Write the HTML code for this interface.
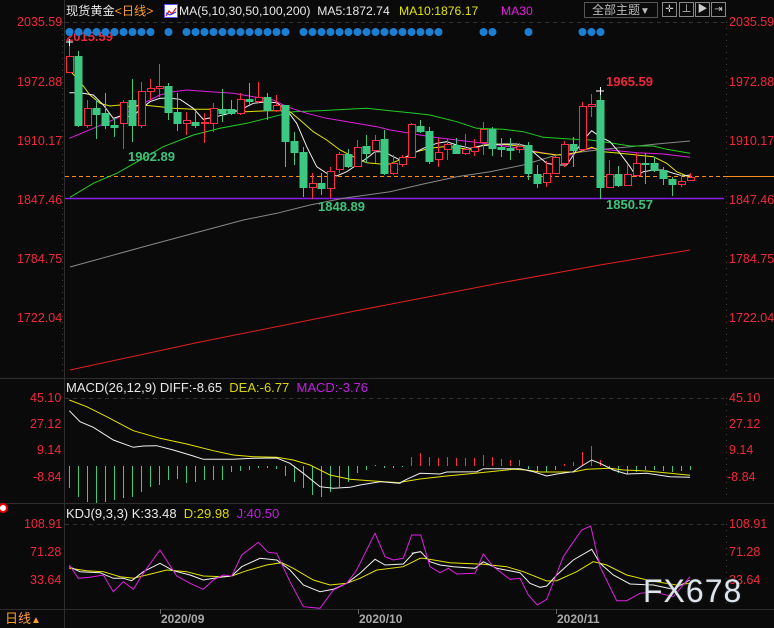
<!DOCTYPE html>
<html><head><meta charset="utf-8">
<style>
html,body{margin:0;padding:0;background:#0a0a0a;width:774px;height:628px;overflow:hidden;font-family:"Liberation Sans","Noto Sans CJK SC",sans-serif;}
svg{position:absolute;left:0;top:0}
.t{position:absolute;font-size:13px;white-space:nowrap;line-height:14px}
.h{font-size:12.2px}
.ax{position:absolute;font-size:12.5px;color:#f0283c;white-space:nowrap;line-height:13px}
.ib{position:absolute;top:2px;width:13px;height:13px;border:1px solid #888;color:#ccc;font-size:10px;line-height:13px;text-align:center}
</style></head><body>
<svg id="s" width="774" height="628" xmlns="http://www.w3.org/2000/svg">
<rect width="774" height="628" fill="#0a0a0a"/>
<g stroke="#2e2e2e" stroke-width="1">
<line x1="64.5" y1="0" x2="64.5" y2="628"/>
<line x1="0" y1="378.5" x2="774" y2="378.5"/>
<line x1="0" y1="503.5" x2="774" y2="503.5"/>
<line x1="0" y1="609.5" x2="774" y2="609.5"/>
</g>
<g stroke="#333" stroke-dasharray="4,4">
<line x1="65" y1="22.5" x2="724" y2="22.5"/>
<line x1="65" y1="398.5" x2="724" y2="398.5"/>
<line x1="65" y1="524.5" x2="724" y2="524.5"/>
</g>
<g stroke="#444" stroke-dasharray="1,5">
<line x1="726.5" y1="22" x2="726.5" y2="376"/>
<line x1="726.5" y1="398" x2="726.5" y2="500"/>
<line x1="726.5" y1="524" x2="726.5" y2="606"/>
<line x1="62.5" y1="22" x2="62.5" y2="376"/>
</g>
<g stroke="#666"><line x1="160.5" y1="609" x2="160.5" y2="614"/><line x1="358.5" y1="609" x2="358.5" y2="614"/><line x1="556.5" y1="609" x2="556.5" y2="614"/></g>
<line x1="65" y1="176.5" x2="724" y2="176.5" stroke="#ff8c1a" stroke-dasharray="4,3"/>
<line x1="724" y1="176.5" x2="774" y2="176.5" stroke="#ff8c1a"/>
<line x1="65" y1="198.5" x2="724" y2="198.5" stroke="#8a1ee8" stroke-width="1.5"/>
<text x="66" y="41" fill="#f0283c" font-size="13" font-weight="bold" font-family="Liberation Sans, sans-serif">2015.59</text>
<g id="g"></g>
</svg>

<div class="t h" style="left:66px;top:4px;color:#e8e8e8">现货黄金<span style="color:#ff9c2a">&lt;日线&gt;</span></div>
<div style="position:absolute;left:164px;top:4px;width:12px;height:12px;background:#fff;border:1px solid #55f"><svg width="12" height="12" style="position:static"><polyline points="1,10 4,5 7,8 11,2" fill="none" stroke="#e22" stroke-width="1.3"/><polyline points="1,7 5,9 11,6" fill="none" stroke="#22e" stroke-width="1"/></svg></div>
<div class="t h" style="left:179px;top:4px;color:#e8e8e8">MA(5,10,30,50,100,200)&nbsp; MA5:1872.74</div>
<div class="t h" style="left:399px;top:4px;color:#e4e400">MA10:1876.17</div>
<div class="t h" style="left:501px;top:4px;color:#e020e0">MA30</div>
<div style="position:absolute;left:584px;top:2px;width:72px;height:14px;border:1px solid #555;color:#bbb;font-size:12px;line-height:14px;text-align:center">全部主题<span style="font-size:10px">▼</span></div>
<div class="ib" style="left:662px">✛</div>
<div class="ib" style="left:679px">⊥</div>
<div class="ib" style="left:695px">▶</div>
<div class="ib" style="left:711px">⇥</div>

<div class="ax" style="left:17px;top:16px">2035.59</div><div class="ax" style="left:729px;top:16px">2035.59</div>
<div class="ax" style="left:17px;top:76px">1972.88</div><div class="ax" style="left:729px;top:76px">1972.88</div>
<div class="ax" style="left:17px;top:135px">1910.17</div><div class="ax" style="left:729px;top:135px">1910.17</div>
<div class="ax" style="left:17px;top:194px">1847.46</div><div class="ax" style="left:729px;top:194px">1847.46</div>
<div class="ax" style="left:17px;top:253px">1784.75</div><div class="ax" style="left:729px;top:253px">1784.75</div>
<div class="ax" style="left:17px;top:312px">1722.04</div><div class="ax" style="left:729px;top:312px">1722.04</div>
<div class="ax" style="left:30px;top:392px">45.10</div><div class="ax" style="left:729px;top:392px">45.10</div>
<div class="ax" style="left:30px;top:418px">27.12</div><div class="ax" style="left:729px;top:418px">27.12</div>
<div class="ax" style="left:37px;top:444px">9.14</div><div class="ax" style="left:729px;top:444px">9.14</div>
<div class="ax" style="left:33px;top:471px">-8.84</div><div class="ax" style="left:727px;top:471px">-8.84</div>
<div class="ax" style="left:24px;top:518px">108.91</div><div class="ax" style="left:729px;top:518px">108.91</div>
<div class="ax" style="left:30px;top:546px">71.28</div><div class="ax" style="left:729px;top:546px">71.28</div>
<div class="ax" style="left:30px;top:574px">33.64</div><div class="ax" style="left:729px;top:574px">33.64</div>

<div class="t" style="left:66px;top:381px;color:#e8e8e8">MACD(26,12,9) DIFF:-8.65 &nbsp;<span style="color:#d8d800">DEA:-6.77</span> &nbsp;<span style="color:#c020e0">MACD:-3.76</span></div>
<div class="t" style="left:66px;top:507px;color:#e8e8e8">KDJ(9,3,3) K:33.48 &nbsp;<span style="color:#d8d800">D:29.98</span> &nbsp;<span style="color:#c020e0">J:40.50</span></div>
<div style="position:absolute;left:0px;top:505px;width:6px;height:6px;border-radius:50%;background:#fff;box-shadow:0 0 0 2px #e00"></div>

<div class="t" style="left:128px;top:150px;color:#3cc47c;font-weight:bold">1902.89</div>
<div class="t" style="left:318px;top:200px;color:#3cc47c;font-weight:bold">1848.89</div>
<div class="t" style="left:606px;top:75px;color:#f0283c;font-weight:bold">1965.59</div>
<div class="t" style="left:606px;top:198px;color:#3cc47c;font-weight:bold">1850.57</div>

<div class="t" style="left:161px;top:612px;color:#aaa;font-size:12px;font-weight:bold">2020/09</div>
<div class="t" style="left:359px;top:612px;color:#aaa;font-size:12px;font-weight:bold">2020/10</div>
<div class="t" style="left:557px;top:612px;color:#aaa;font-size:12px;font-weight:bold">2020/11</div>
<div class="t" style="left:5px;top:612px;color:#ff9c2a">日线<span style="font-size:10px">▲</span></div>
<div style="position:absolute;left:643px;top:573px;font-size:32px;color:#dde4ee;letter-spacing:1px;font-family:'Liberation Sans',sans-serif;text-shadow:0 0 2px #333">FX678</div>

<script>
var g=document.getElementById('g'),h='';
function P(a,ox,oy){var s='';for(var i=0;i<a.length;i+=2)s+=(ox+a[i]/3).toFixed(1)+','+(oy+a[i+1]/3).toFixed(1)+' ';return s;}
function L(p,c,w){h+='<polyline points="'+p+'" fill="none" stroke="'+c+'" stroke-width="'+(w||1)+'"/>';}
L('70,370 200,342 350,312 500,283 600,265 690,250','#e0201e');
L('70,267 150,245 '+P([550,540,650,520,750,495,850,475,990,455],60,40)+P([100,432,200,410,300,395,400,375,500,345,580,335,640,328,720,320,800,312,900,303],390,40),'#888');
L(P([30,472,100,430,170,400,250,355,310,320,400,285,480,265,560,250,640,230,700,215,780,212,860,208,920,205,990,212],60,40)+P([60,218,120,225,200,245,260,265,340,268,400,275,460,292,540,297,600,300,660,308,720,318,790,318,830,328,900,340],390,40),'#22cc22');
L(P([28,295,100,265,170,235,240,195,300,165,340,155,380,150,450,155,520,160,580,170,640,180,680,200,740,220,800,235,880,248,950,260,990,270],60,40)+P([60,280,120,290,200,300,280,310,360,320,440,335,500,345,540,345,580,330,610,325,660,330,740,338,820,342,900,352],390,40),'#e020e0');
L(P([28,90,60,125,90,165,120,190,150,198,180,195,210,200,240,195,270,197,300,200,340,205,400,208,450,208,500,210,560,215,620,212,660,212,690,215,720,240,760,275,800,300,840,330,880,350,920,368,960,372,990,372],60,40)+P([40,355,80,335,120,325,160,320,200,322,240,330,280,315,320,312,360,315,400,320,430,335,460,340,500,345,540,342,570,335,605,322,640,335,690,340,740,345,790,350,830,370,860,395,890,408,900,410],390,40),'#e4e400');
L(P([28,158,60,158,100,165,130,195,160,235,190,225,215,232,245,205,270,185,300,175,330,175,360,178,400,205,430,238,460,232,500,222,540,210,580,190,620,185,650,188,680,210,710,250,740,320,770,380,800,400,830,408,860,395,890,375,920,355,945,335,975,335,990,345],60,40)+P([30,360,60,345,100,325,140,310,170,305,200,315,240,325,270,318,300,315,340,312,380,312,410,318,440,345,470,370,500,375,530,375,560,330,580,300,605,272,630,290,660,305,690,340,720,380,738,408,760,395,790,390,820,390,850,400,880,408,900,405],390,40),'#f0f0f0');
var C=[[56,72,42,72,1],[56,125,51,127,0],[108,125,100,128,1],[108,114,100,139,0],[113,125,93,129,0],[125,127,118,137,0],[102,123,100,149,1],[100,125,79,142,0],[91,125,82,128,1],[88,91,79,100,1],[86,88,64,97,1],[86,112,83,120,0],[112,123,93,131,0],[120,123,112,135,1],[122,125,112,128,0],[122,123,113,143,1],[108,123,103,132,1],[109,113,89,122,0],[109,113,100,115,0],[99,113,93,115,1],[99,101,83,105,0],[97,101,82,103,1],[97,110,93,120,0],[105,110,95,112,1],[105,141,105,167,0],[141,152,132,165,0],[152,187,147,197,0],[183,187,173,199,1],[183,188,173,195,0],[171,188,167,198,1],[154,169,152,173,1],[154,166,149,168,0],[147,166,140,167,1],[146,153,135,163,0],[140,150,135,163,1],[139,173,130,175,0],[163,173,155,175,1],[157,164,155,167,1],[124,157,123,158,1],[126,131,120,133,0],[131,161,127,164,0],[152,159,138,167,1],[144,149,139,160,1],[145,153,138,153,0],[149,153,134,155,1],[147,151,139,156,1],[129,142,122,155,1],[129,148,127,156,0],[147,149,138,157,0],[148,150,138,160,0],[146,149,143,153,1],[145,173,142,180,0],[174,183,165,188,0],[173,182,161,187,1],[157,173,155,174,1],[144,163,141,167,1],[144,150,137,167,0],[106,149,102,151,1],[104,106,94,117,1],[100,187,90,199,0],[174,187,160,188,1],[174,185,166,187,0],[174,185,165,186,1],[163,175,153,177,1],[163,164,153,184,0],[163,170,157,172,0],[170,178,167,185,0],[179,184,177,196,0],[181,184,175,187,1],[177,180,173,181,1]];
C.forEach(function(c,k){var x=69+9*k,col=c[4]?'#ff2e44':'#3cc882';
 h+='<line x1="'+(x+.5)+'" y1="'+c[2]+'" x2="'+(x+.5)+'" y2="'+c[3]+'" stroke="'+col+'"/>';
 var bh=Math.max(1,c[1]-c[0]);
 if(c[4])h+='<rect x="'+(x-3+.5)+'" y="'+(c[0]+.5)+'" width="7" height="'+bh+'" fill="#0a0a0a" stroke="'+col+'"/>';
 else h+='<rect x="'+(x-3.5)+'" y="'+c[0]+'" width="8" height="'+(bh+1)+'" fill="'+col+'"/>';
});
h+='<path d="M66 42h7M69.5 39v7M596 91h8M600.5 87v8" stroke="#fff"/>';
var D=[0,1,2,3,4,5,6,7,8,9,11,13,14,15,16,17,18,19,20,21,22,23,24];for(var i=26;i<=41;i++)D.push(i);D.push(46,47,51,57,58,59);
D.forEach(function(k){h+='<circle cx="'+(69+9*k+0.5)+'" cy="32" r="4" fill="#1a7ed2"/>';});
var B=[488,497,502,503,502,500,498,497,492,487,485,480,479,483,482,480,480,480,472,471,470,468,468,469,476,482,488,495,497,492,487,482,473,470,465,468,468,467,457,453,457,458,457,458,458,458,455,457,459,460,460,469,472,472,470,464,462,452,446,460,468,473,474,472,470,470,471,472,471,470];
B.forEach(function(b,k){var x=69+9*k+.5,red=(k>=38&&k<=50)||(k>=55&&k<=59);var base=466;
 h+='<line x1="'+x+'" y1="'+base+'" x2="'+x+'" y2="'+b+'" stroke="'+(red?'#ff2e44':'#3cc882')+'"/>';});
L(P([208,90,260,110,320,140,400,182,480,205,560,222,640,242,700,255,760,260,830,262,880,270,930,285,990,315,1050,328,1120,333,1200,338],0,370)+P([70,335,120,327,200,318,300,308,400,298,440,300,480,306,580,306,620,298,690,295,730,300,800,303,870,310,930,316],380,370),'#e4e400');
L(P([208,122,240,155,280,172,340,210,400,232,430,228,470,227,520,240,580,258,610,268,700,268,760,265,830,264,870,280,910,310,960,350,1000,355,1050,352,1080,345,1140,335,1200,340],0,370)+P([60,338,80,328,120,310,180,312,200,306,290,305,310,296,420,296,460,305,500,318,530,312,580,305,610,285,635,270,660,280,700,300,740,312,800,310,870,320,930,322],380,370),'#f0f0f0');
L(P([28,205,80,212,130,215,180,230,220,235,260,225,320,210,380,215,430,228,490,230,515,228,560,212,620,195,665,188,700,205,760,240,810,255,860,250,900,235,950,210,1030,200,1080,175],60,500)+P([70,175,150,188,250,193,320,200,370,215,440,243,470,242,530,215,580,185,620,195,680,225,750,242,830,255,870,250],400,500),'#e4e400');
L(P([28,200,60,215,120,218,160,235,190,235,215,242,250,215,300,190,340,212,390,225,430,240,480,232,515,228,545,200,600,175,650,180,690,210,730,255,780,275,820,268,860,250,900,220,945,178,975,195,1030,192,1060,160,1080,155],60,500)+P([35,160,62,155,90,185,120,195,160,200,225,205,250,185,290,205,360,218,390,250,420,262,440,258,470,225,520,180,575,148,600,190,640,225,690,252,760,255,820,268,870,240],400,500),'#f0f0f0');
L(P([28,195,55,235,90,232,130,225,160,275,190,245,220,268,250,220,300,150,350,228,390,250,430,268,460,240,490,225,515,228,545,165,595,127,625,157,650,160,690,245,730,320,780,325,820,270,860,250,890,210,945,100,975,170,1000,180,1030,175,1055,105,1080,105],60,500)+P([35,105,62,105,90,200,120,218,145,205,170,222,225,220,250,162,280,200,330,238,360,235,385,285,412,315,440,298,490,170,510,140,545,90,572,78,600,200,650,302,680,302,720,280,760,275,820,290,870,230],400,500),'#e020e0');
g.innerHTML=h;
</script>
</body></html>
